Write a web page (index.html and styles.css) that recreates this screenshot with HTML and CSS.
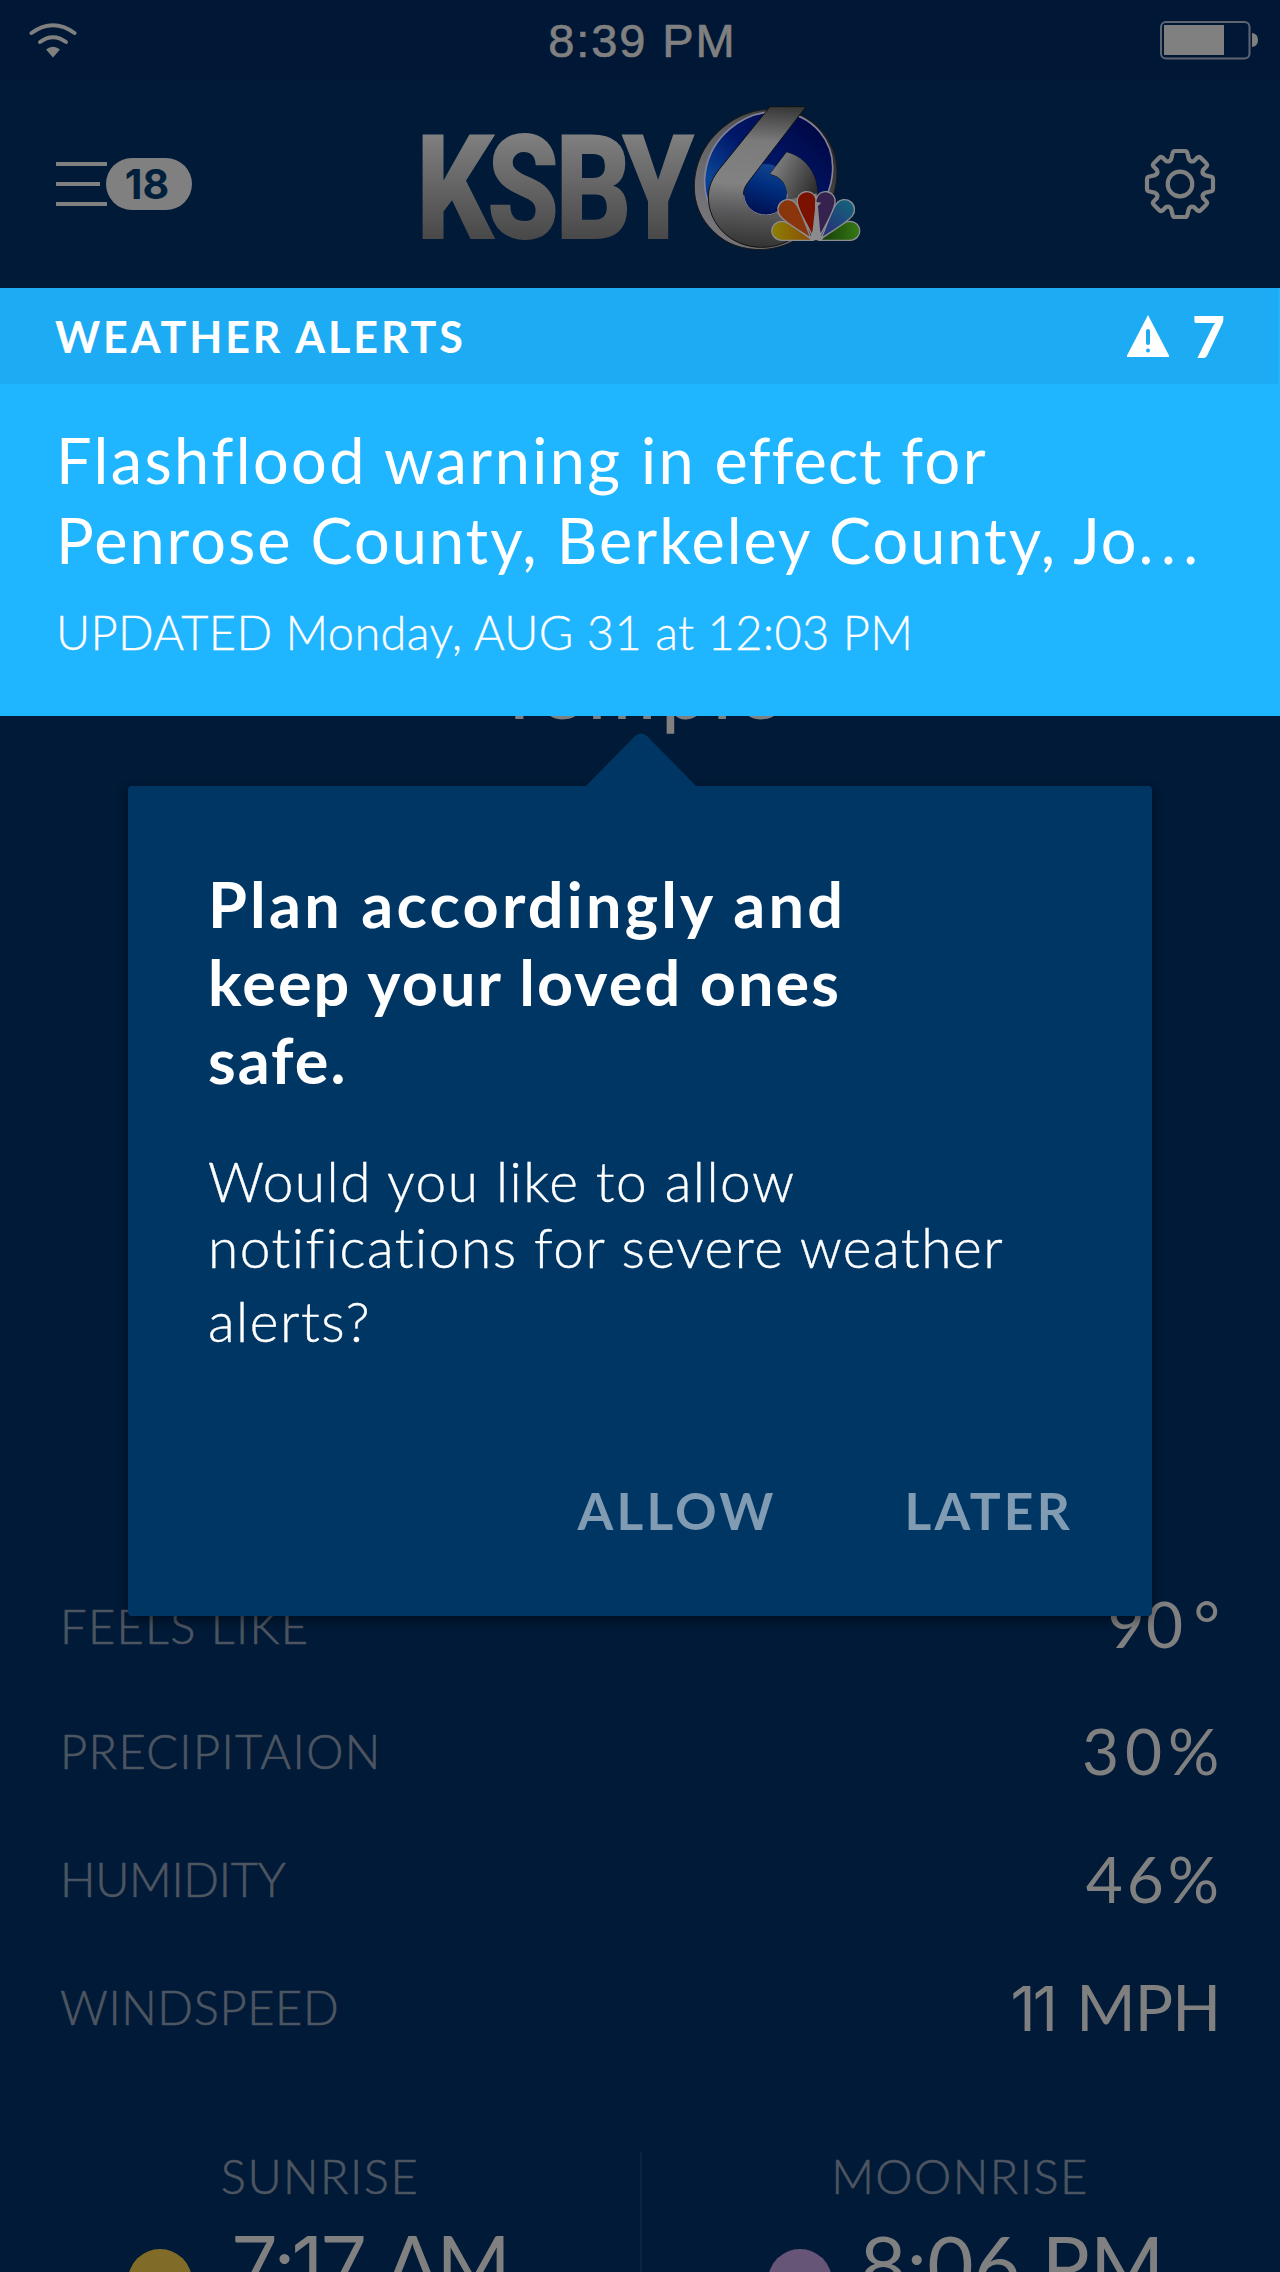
FILE: index.html
```html
<!DOCTYPE html>
<html lang="en">
  <head>
    <meta charset="UTF-8" />
    <meta name="viewport" content="width=device-width, initial-scale=1.0" />
    <title>KSBY 6 - Weather</title>
    <link rel="stylesheet" href="styles.css">
  </head>
  <body>
    <div class="statusbar">
      <svg class="wifi" width="50" height="40" viewBox="28 20 50 40">
        <path d="M31.500 33 Q53 17.500 74.500 33" />
        <path d="M40 42 Q53 32.500 66 42" />
        <path class="dot" d="M46 49.500 Q53 44 60 49.500 L53 57.500 Z" />
      </svg>
      <span class="clock">8:39 PM</span>
      <svg class="battery" width="100" height="40" viewBox="1159 21 100 40">
        <rect class="shell" x="1161" y="23" width="88.500" height="36.500" rx="5" />
        <rect x="1164" y="26" width="60" height="30" />
        <path d="M1252 34 Q1258 35 1258 41 Q1258 47 1252 48 Z" />
      </svg>
    </div>

    <header class="topbar">
      <div class="menu">
        <svg width="52" height="46" viewBox="0 0 52 46">
          <path d="M0 3 H51 M0 23 H44 M0 43 H51" />
        </svg>
        <span class="badge">18</span>
      </div>

      <svg class="logo" width="480" height="208" viewBox="0 -30 1440 624">
        <defs>
          <linearGradient id="letters" gradientUnits="userSpaceOnUse" x1="0" y1="130" x2="0" y2="450">
            <stop offset="0" stop-color="#808080" />
            <stop offset="1" stop-color="#484848" />
          </linearGradient>
          <linearGradient id="ring" x1="0" y1="0" x2="1" y2="0">
            <stop offset="0" stop-color="#77777b" />
            <stop offset="0.5" stop-color="#5c5c60" />
            <stop offset="1" stop-color="#2b2b2b" />
          </linearGradient>
          <linearGradient id="disc" x1="0" y1="0.3" x2="1" y2="0.2">
            <stop offset="0" stop-color="#00309a" />
            <stop offset="0.15" stop-color="#0b4496" />
            <stop offset="0.5" stop-color="#00186a" />
            <stop offset="1" stop-color="#000744" />
          </linearGradient>
          <linearGradient id="hole" x1="0.7" y1="0" x2="0.4" y2="1">
            <stop offset="0" stop-color="#17458f" />
            <stop offset="0.4" stop-color="#003080" />
            <stop offset="1" stop-color="#000e50" />
          </linearGradient>
          <linearGradient id="six" gradientUnits="userSpaceOnUse" x1="1120" y1="50" x2="1090" y2="472">
            <stop offset="0" stop-color="#383838" />
            <stop offset="0.25" stop-color="#7b7b7b" />
            <stop offset="0.56" stop-color="#828282" />
            <stop offset="0.75" stop-color="#5b5b5d" />
            <stop offset="1" stop-color="#333" />
          </linearGradient>
          <linearGradient id="hook" gradientUnits="userSpaceOnUse" x1="1125" y1="230" x2="1250" y2="290">
            <stop offset="0" stop-color="#7c7c7c" />
            <stop offset="1" stop-color="#2e2e2e" />
          </linearGradient>
          <linearGradient id="yellow">
            <stop offset="0" stop-color="#8c8000" />
            <stop offset="1" stop-color="#8a4a08" />
          </linearGradient>
          <linearGradient id="green">
            <stop offset="0" stop-color="#153a08" />
            <stop offset="1" stop-color="#357a14" />
          </linearGradient>
          <linearGradient id="cyan" x1="0" y1="0" x2="0" y2="1">
            <stop offset="0" stop-color="#14627c" />
            <stop offset="1" stop-color="#2a2a78" />
          </linearGradient>
        </defs>

        <g class="letters" fill="url(#letters)">
          <text x="48" y="447" textLength="234" lengthAdjust="spacingAndGlyphs">K</text>
          <text x="260" y="447" textLength="218" lengthAdjust="spacingAndGlyphs">S</text>
          <text x="466" y="447" textLength="230" lengthAdjust="spacingAndGlyphs">B</text>
          <text x="665" y="447" textLength="218" lengthAdjust="spacingAndGlyphs">Y</text>
        </g>

        <ellipse cx="1097" cy="268" rx="222" ry="202" transform="rotate(-40 1097 268)" fill="url(#ring)" stroke="#1a1a1c" stroke-width="3" />
        <ellipse cx="1106" cy="254" rx="200" ry="180" transform="rotate(-40 1106 254)" fill="url(#disc)" stroke="#83839a" stroke-width="5" />
        <circle cx="1097" cy="300" r="78" fill="url(#hole)" />
        <path d="M1110 50 H1218 L1048 272 C1034 290 1030 300 1031 315 C1034 350 1062 375 1097 375 C1134 375 1162 348 1162 312 C1162 285 1145 260 1110 252 L1160 187 C1225 205 1252 260 1252 310 C1252 410 1170 472 1085 472 C990 472 925 400 925 320 C925 290 938 262 960 235 Z" fill="url(#six)" stroke="#111" stroke-width="3" />
        <path d="M1110 252 L1160 187 C1225 205 1252 260 1252 310 L1160 330 C1166 285 1145 260 1110 252 Z" fill="url(#hook)" />
        <path d="M1031 315 C1034 350 1062 375 1097 375 C1134 375 1162 348 1162 312" fill="none" stroke="#8088a0" stroke-width="3" />

        <g stroke="#8d8d93" stroke-width="4">
          <path d="M1238 451 H1146 C1104 448 1106 396 1146 394 C1160 394 1170 402 1238 451 Z" fill="url(#yellow)" />
          <path d="M1258 451 H1350 C1390 448 1388 396 1350 394 C1334 394 1326 402 1258 451 Z" fill="url(#green)" />
          <path d="M0 0 C-10 -40 -30 -80 -30 -112 A30 30 0 0 1 30 -112 C30 -80 10 -40 0 0 Z" transform="translate(1234 446) rotate(-39)" fill="#8a350c" />
          <path d="M0 0 C-10 -40 -30 -80 -30 -112 A30 30 0 0 1 30 -112 C30 -80 10 -40 0 0 Z" transform="translate(1263 446) rotate(39)" fill="url(#cyan)" />
          <path d="M0 0 C-8 -40 -29 -80 -29 -113 A29 29 0 0 1 29 -113 C29 -80 10 -40 0 0 Z" transform="translate(1240 445) rotate(-10)" fill="#7b1200" />
          <path d="M0 0 C-8 -40 -29 -80 -29 -113 A29 29 0 0 1 29 -113 C29 -80 10 -40 0 0 Z" transform="translate(1257 445) rotate(10)" fill="#35224e" />
        </g>
        <path d="M1230 451 L1238 420 L1246 348 L1245 335 L1264 338 L1254 348 L1260 420 L1268 451 Z" fill="#8b8b8d" />
      </svg>

      <svg class="gear" width="72" height="72" viewBox="-36 -36 72 72">
        <defs>
          <path id="quarter" d="M0 -33 H5 Q7 -33 7.500 -30.500 L8.800 -25 Q10.500 -21.500 14 -23 L17.500 -26.500 Q19.500 -27.800 21 -26 L26 -21 Q27.800 -19.500 26.500 -17.500 L23 -14 Q21.500 -10.500 25 -8.800 L30.500 -7.500 Q33 -7 33 -5 V0" />
        </defs>
        <use href="#quarter" />
        <use href="#quarter" transform="rotate(90)" />
        <use href="#quarter" transform="rotate(180)" />
        <use href="#quarter" transform="rotate(270)" />
        <circle r="12.300" />
      </svg>
    </header>

    <main class="content">
      <h1 class="city">Temple</h1>

      <div class="stats">
        <div class="stat first">
          <span class="label feels">FEELS LIKE</span>
          <span class="value">90<span class="deg">°</span></span>
        </div>
        <div class="stat">
          <span class="label precip">PRECIPITAION</span>
          <span class="value pct30">30%</span>
        </div>
        <div class="stat">
          <span class="label humid">HUMIDITY</span>
          <span class="value pct46">46%</span>
        </div>
        <div class="stat">
          <span class="label wind">WINDSPEED</span>
          <span class="value mph"><span class="ones">11</span> MPH</span>
        </div>
      </div>

      <div class="rises">
        <div class="rise">
          <span class="label">SUNRISE</span>
          <div class="time sun"><i></i><span>7:<b>1</b>7 AM</span></div>
        </div>
        <div class="rise">
          <span class="label">MOONRISE</span>
          <div class="time moon"><i></i><span>8:06 PM</span></div>
        </div>
      </div>
    </main>

    <section class="alert">
      <div class="alert-head">
        <span class="alert-title">WEATHER ALERTS</span>
        <span class="alert-count">
          <svg width="44" height="44" viewBox="0 0 44 44">
            <path d="M22 1 L43 41.500 V43 H1 V41.500 Z" fill="#fff" />
            <path d="M22 17 V29" stroke="#1dabf3" stroke-width="4" stroke-linecap="round" />
            <circle cx="22" cy="36.500" r="2" fill="#1dabf3" />
          </svg>
          <span>7</span>
        </span>
      </div>
      <div class="alert-body">
        <p class="headline">
          <span class="l1">Flashflood warning in <em>effect</em> for</span>
          <span class="l2">Penrose County, Berkeley County, Jo<em>...</em></span>
        </p>
        <p class="updated">UPDATED Monday, AUG 31 at 12:03 PM</p>
      </div>
    </section>

    <section class="popup">
      <svg class="arrow" width="112" height="54" viewBox="0 0 112 54">
        <path d="M0 54 L50 3 Q56 -2 62 3 L112 54 Z" fill="#003664" />
      </svg>
      <h2>
        <span class="t1">Plan accordingly and</span>
        <span class="t2">keep your loved ones</span>
        <span class="t3">safe.</span>
      </h2>
      <p>
        <span>Would you like to allow</span>
        <span>notifications for severe weather</span>
        <span class="last">alerts?</span>
      </p>
      <div class="btns">
        <button>ALLOW</button>
        <button>LATER</button>
      </div>
    </section>
  </body>
</html>
```
FILE: styles.css
```css
* {
  box-sizing: border-box;
}
body {
  position: relative;
  margin: 0;
  width: 1280px;
  height: 2272px;
  overflow: hidden;
  font-family: Lato, "Open Sans", sans-serif;
  background-color: #001a37;
  color: #808080;
}
h1,
h2,
p {
  margin: 0;
  font-weight: 400;
}

/* status bar */
.statusbar {
  height: 80px;
  display: flex;
  justify-content: space-between;
  align-items: flex-start;
  padding: 20px 21px 0 28px;
  background-color: #001735;
}
.wifi {
  fill: none;
  stroke: #808080;
  stroke-width: 4;
  stroke-linecap: round;
}
.wifi .dot {
  fill: #808080;
  stroke: none;
}
.clock {
  margin-left: 48px;
  font: 47px/42px "Liberation Sans", Arial, sans-serif;
  letter-spacing: 1.9px;
  -webkit-text-stroke: 0.7px #808080;
}
.battery {
  fill: #808080;
}
.battery .shell {
  fill: none;
  stroke: #5f6671;
  stroke-width: 2;
}

/* header */
.topbar {
  height: 208px;
  display: grid;
  grid-template-columns: 1fr 480px 1fr;
  align-items: center;
}
.menu {
  display: flex;
  align-items: center;
  padding-left: 56px;
}
.menu svg {
  stroke: #808080;
  stroke-width: 4;
}
.badge {
  width: 86px;
  height: 52px;
  margin-left: -2px;
  padding-right: 4px;
  border-radius: 26px;
  background-color: #808080;
  color: #00203c;
  font: 700 41px/52px Inter, sans-serif;
  text-align: center;
}
.letters text {
  font: 900 441px Roboto, sans-serif;
}
.gear {
  justify-self: end;
  margin-right: 64px;
  fill: none;
  stroke: #808080;
  stroke-width: 4.2;
}

/* forecast under the banner */
.city {
  padding-top: 349px;
  text-align: center;
  font-size: 84px;
  line-height: 100px;
  letter-spacing: 4.5px;
}
.stats {
  margin-top: 822px;
  padding: 0 60px 0 60px;
}
.stat {
  height: 128px;
  display: flex;
  justify-content: space-between;
  line-height: 128px;
}
.stat.first .label {
  padding-top: 3px;
}
.stat.first .value {
  padding-top: 1px;
}
.label {
  font-size: 47px;
  font-weight: 300;
  color: #4d5561;
  -webkit-text-stroke: 0.6px #4d5561;
}
.feels,
.precip {
  letter-spacing: 1.35px;
}
.humid {
  letter-spacing: -0.3px;
}
.wind {
  letter-spacing: 0.6px;
}
.value {
  font-size: 64px;
  letter-spacing: 1.4px;
}
.deg {
  margin-left: 9px;
  letter-spacing: 0;
}
.pct30 {
  letter-spacing: 5.8px;
  margin-right: -5px;
}
.pct46 {
  letter-spacing: 3.9px;
  margin-right: -3px;
}
.mph {
  letter-spacing: -1px;
  word-spacing: 6px;
}
.ones {
  font-family: Inter, sans-serif;
  font-size: 62px;
  letter-spacing: -3px;
}
.rises {
  display: flex;
  margin-top: 81px;
}
.rise {
  width: 640px;
  height: 130px;
}
.rise .label {
  display: block;
  margin-top: -4px;
  line-height: 56px;
  letter-spacing: 1.5px;
  text-align: center;
}
.rise + .rise {
  box-shadow: inset 2px 0 #0b2440;
}
.time {
  display: flex;
  align-items: center;
  gap: 39px;
  margin-top: 11px;
  padding-left: 128px;
  height: 96px;
  line-height: 96px;
  font-size: 80px;
  letter-spacing: -3px;
  word-spacing: 7px;
}
.time b {
  font: 400 78px Inter, sans-serif;
}
.time i {
  width: 64px;
  height: 64px;
  margin-top: 35px;
  border-radius: 50%;
  background-color: #806b28;
}
.time.moon {
  gap: 28px;
  letter-spacing: 0.4px;
  word-spacing: 0;
}
.moon i {
  background-color: #665577;
}

/* alert banner */
.alert {
  position: absolute;
  top: 288px;
  left: 0;
  width: 1280px;
  height: 428px;
  background-color: #1fb5ff;
  color: #fff;
}
.alert-head {
  width: 1278px;
  height: 96px;
  display: flex;
  justify-content: space-between;
  align-items: center;
  padding: 0 53px 0 55px;
  background-color: #1dabf3;
}
.alert-title {
  font-size: 43px;
  font-weight: 700;
  letter-spacing: 2.9px;
}
.alert-count {
  display: flex;
  align-items: center;
  gap: 22px;
  font-size: 57px;
  font-weight: 900;
}
.alert-body {
  padding: 36px 0 0 56px;
  white-space: nowrap;
}
.headline {
  font-size: 63px;
  line-height: 80px;
}
.headline span {
  display: block;
}
.headline em {
  font-style: normal;
}
.l1 {
  letter-spacing: 2.4px;
}
.l1 em {
  letter-spacing: 1px;
}
.l2 {
  letter-spacing: 2px;
}
.l2 em {
  letter-spacing: 7.5px;
}
.updated {
  margin-top: 22px;
  font-size: 47px;
  font-weight: 300;
  line-height: 60px;
  letter-spacing: 0.35px;
  -webkit-text-stroke: 0.3px #fff;
}

/* permission popup */
.popup {
  position: absolute;
  top: 786px;
  left: 128px;
  width: 1024px;
  height: 830px;
  padding: 79px 79px 0 80px;
  border-radius: 4px;
  background-color: #003664;
  color: #fff;
  box-shadow: 0 4px 12px rgba(0, 0, 0, 0.45);
}
.arrow {
  position: absolute;
  top: -53px;
  left: 456.5px;
}
.popup h2 {
  font-size: 63px;
  font-weight: 700;
  line-height: 78px;
}
.popup h2 span,
.popup p span {
  display: block;
}
.t1 {
  letter-spacing: 3.2px;
}
.t2 {
  letter-spacing: 2.1px;
}
.t3 {
  letter-spacing: 2px;
}
.popup p {
  margin-top: 49px;
  font-size: 55px;
  font-weight: 300;
  line-height: 66px;
  letter-spacing: 1.5px;
  -webkit-text-stroke: 0.4px #fff;
}
.popup p .last {
  margin-top: 8px;
}
.btns {
  display: flex;
  justify-content: flex-end;
  gap: 128px;
  margin-top: 126px;
}
.btns button {
  border: 0;
  padding: 0;
  background: none;
  color: #809bb2;
  font: 700 51.5px/60px Lato, sans-serif;
  letter-spacing: 3.2px;
}
```
